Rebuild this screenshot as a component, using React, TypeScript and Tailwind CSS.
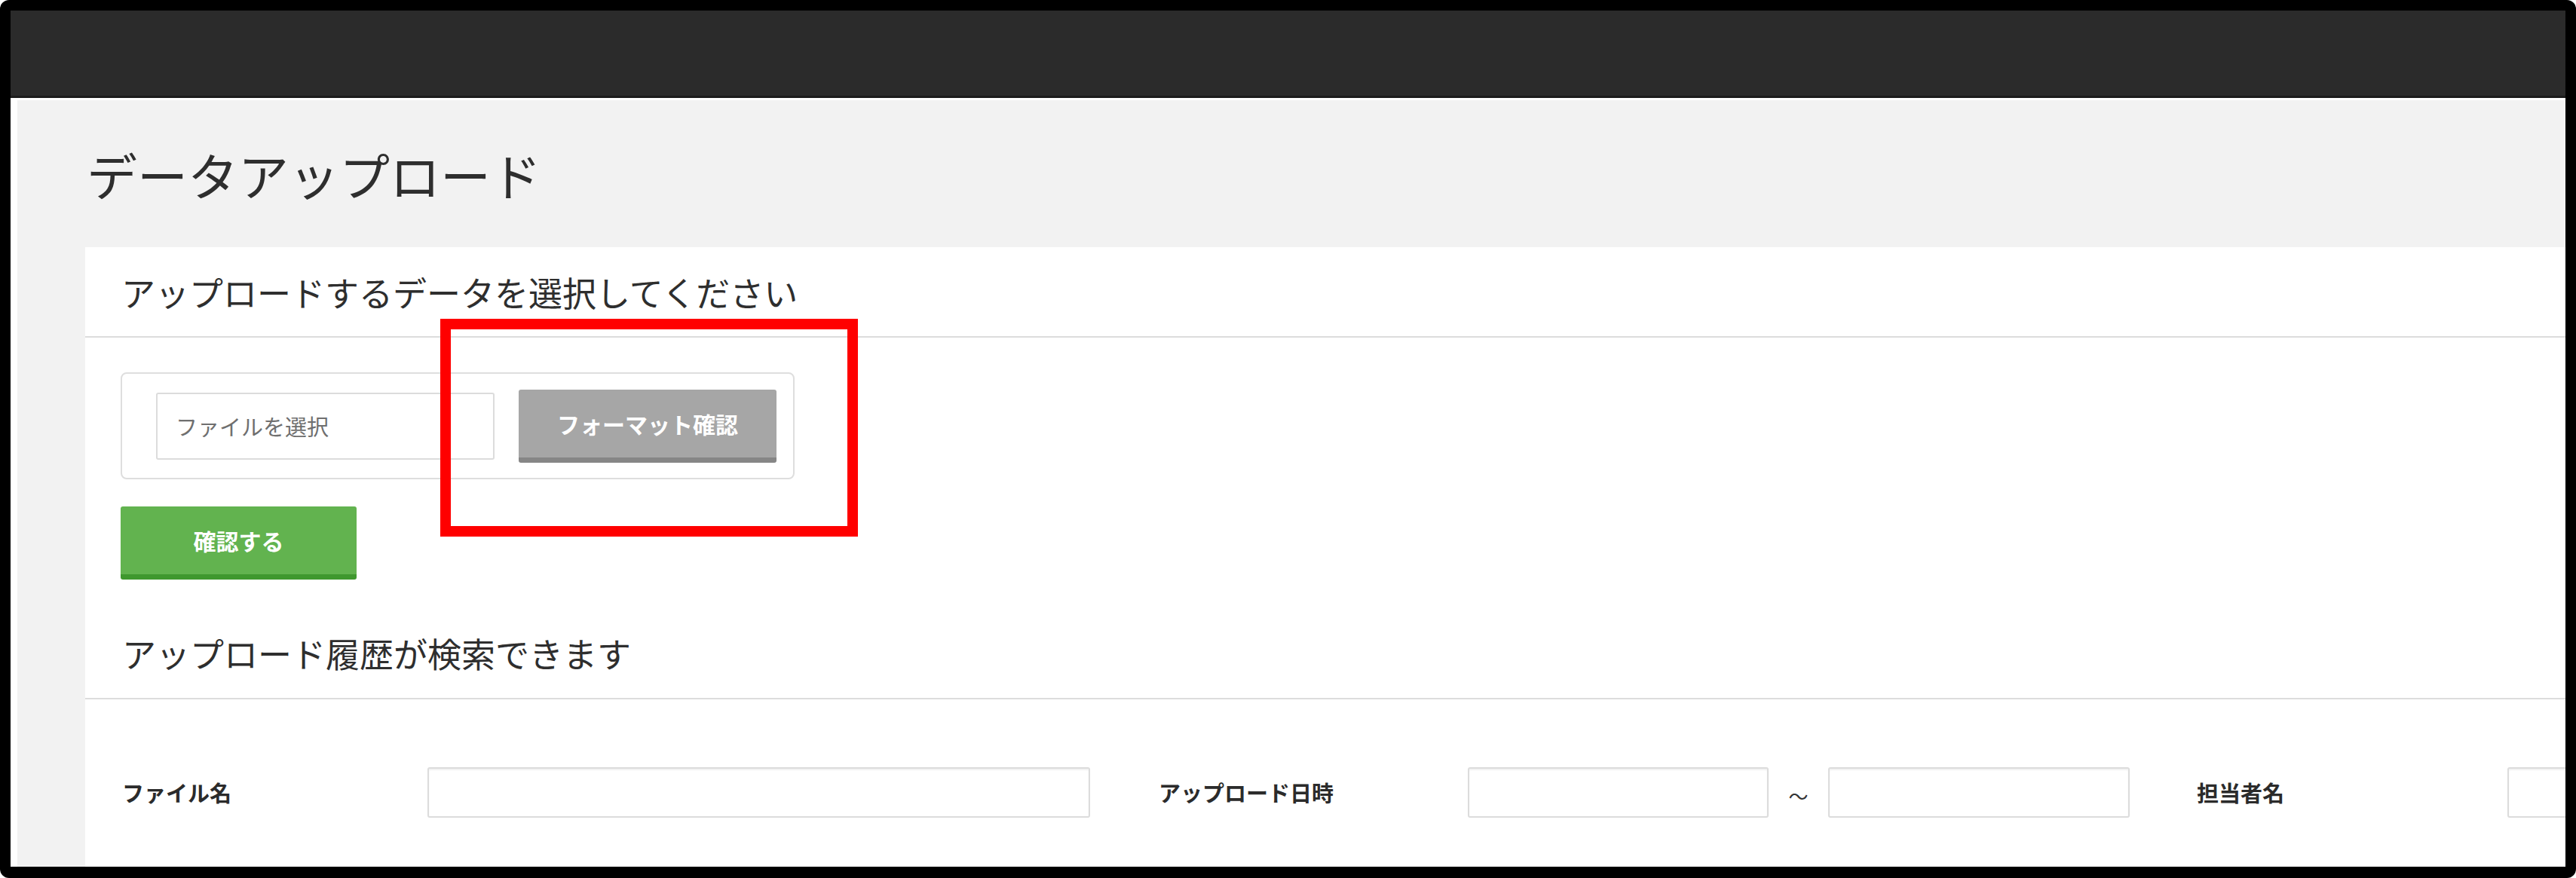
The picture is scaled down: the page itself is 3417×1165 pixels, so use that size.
const jp = { fontFamily: '"Noto Sans CJK JP", "Noto Sans", sans-serif' };

function TextBox({ width }: { width: string }) {
  return (
    <div
      className={`${width} h-[67px] shrink-0 bg-white border-2 border-[#dcdcdc] rounded-[3px] shadow-[inset_0_2px_2px_rgba(0,0,0,0.06)]`}
    />
  );
}

function FileSection() {
  return (
    <div className="pl-[47px] pt-[46px]">
      <div className="w-[894px] h-[142px] border-2 border-[#dedede] rounded-[8px] flex items-center pl-[45px]">
        <div className="w-[449px] h-[89px] border-2 border-[#dcdcdc] rounded-[3px] flex items-center pl-[24px] text-[29px] text-[#6f6f6f] leading-none">
          ファイルを選択
        </div>
        <button className="ml-[32px] w-[342px] h-[97px] bg-[#a6a6a6] border-b-[7px] border-[#868686] rounded-[3px] text-white font-bold text-[30px] leading-none">
          フォーマット確認
        </button>
      </div>
      <button className="mt-[36px] w-[313px] h-[97px] bg-[#62b34f] border-b-[7px] border-[#3f982e] rounded-[3px] text-white font-bold text-[30px] leading-none">
        確認する
      </button>
    </div>
  );
}

function SearchRow() {
  return (
    <div className="flex items-center pl-[49px] pt-[90px] text-[29px] font-bold text-[#2b2b2b] leading-none">
      <div className="w-[405px] shrink-0">ファイル名</div>
      <TextBox width="w-[879px]" />
      <div className="w-[410px] shrink-0 ml-[91px]">アップロード日時</div>
      <TextBox width="w-[399px]" />
      <div className="w-[79px] shrink-0 text-center font-normal text-[26px] text-[#333] pt-[8px]">～</div>
      <TextBox width="w-[400px]" />
      <div className="w-[412px] shrink-0 ml-[89px]">担当者名</div>
      <TextBox width="w-[400px]" />
    </div>
  );
}

export default function App() {
  return (
    <div className="w-[3417px] h-[1165px] bg-white" style={jp}>
      <div className="w-full h-full bg-black rounded-[12px] pt-[14px] pl-[14px] pr-[14px] pb-[15px]">
        <div className="w-full h-full overflow-hidden bg-white flex flex-col">
          <div className="h-[116px] shrink-0 bg-[#2b2b2b] border-b-[3px] border-[#1c1c1c]" />
          <div className="flex-1 mt-[3px] ml-[9px] bg-[#f2f2f2] flex flex-col">
            <div className="h-[195px] shrink-0 flex items-center pl-[92px]">
              <h1 className="text-[67px] leading-none text-[#2e2e2e] font-normal">データアップロード</h1>
            </div>
            <div className="relative ml-[90px] flex-1 bg-white overflow-hidden">
              <div className="h-[120px] flex items-center pl-[48px] border-b-[2px] border-[#dcdcdc]">
                <h2 className="text-[45px] leading-none text-[#2e2e2e]">アップロードするデータを選択してください</h2>
              </div>
              <FileSection />
              <div className="pt-[75px] pb-[37px] pl-[49px] border-b-[2px] border-[#dcdcdc]">
                <h2 className="text-[45px] leading-none text-[#2e2e2e]">アップロード履歴が検索できます</h2>
              </div>
              <SearchRow />
              <div className="absolute left-[471px] top-[95px] w-[554px] h-[289px] border-[14px] border-[#ff0000]" />
            </div>
          </div>
        </div>
      </div>
    </div>
  );
}
